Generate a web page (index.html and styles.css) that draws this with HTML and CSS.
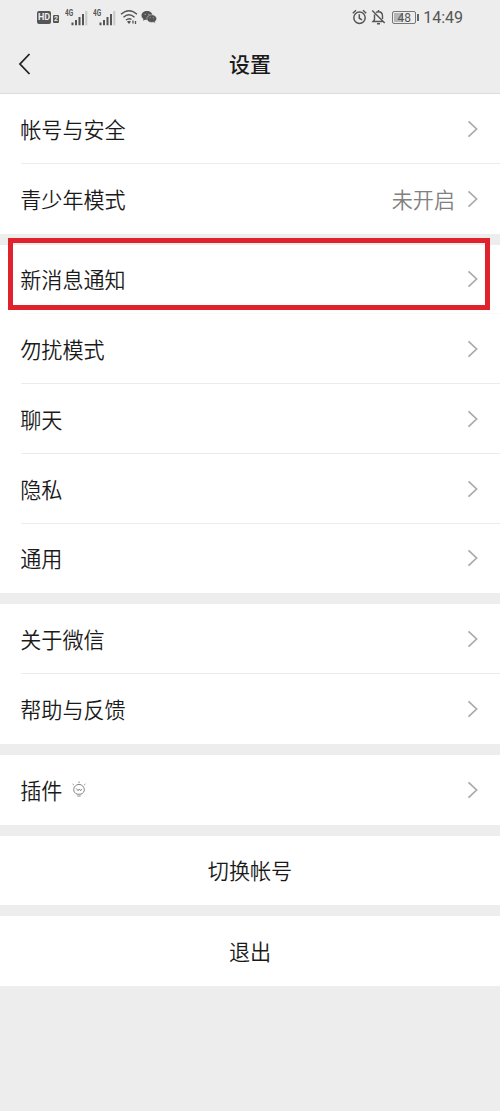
FILE: index.html
```
<!DOCTYPE html>
<html lang="zh-CN">
<head>
<meta charset="utf-8">
<title>设置</title>
<link rel="stylesheet" href="styles.css">
</head>
<body>
<svg class="defs" width="0" height="0">
  <symbol id="chevron" viewBox="0 0 12 18"><path d="M1.500 1.300 9.600 9 1.500 16.700" fill="none" stroke="#aaa" stroke-width="1.700"/></symbol>
  <symbol id="signal" viewBox="0 0 24 20">
    <path d="M5.500 15.500v2.800M9 13v5.300M12.500 10v8.300M16 7v11.300" stroke="#555" stroke-width="2"/>
    <path d="M19.300 4v14.300" stroke="#c8c8c8" stroke-width="2"/>
  </symbol>
</svg>
<div class="phone">
  <header class="statusbar">
    <div class="status-left">
      <span class="hd">HD</span><span class="sim">2</span>
      <span class="cell"><svg width="24" height="20"><use href="#signal"/></svg><b>4G</b></span>
      <span class="cell"><svg width="24" height="20"><use href="#signal"/></svg><b>4G</b></span>
      <svg class="wifi" width="18" height="16" viewBox="0 0 18 16" fill="none" stroke="#555" stroke-width="1.500">
        <path d="M1 5.300Q9-1.900 17 5.300M3.500 8.200Q9 3.200 14.500 8.200M6 11Q9 8.600 11.500 10.500"/>
        <path d="M7 12.500 9 11.800l2 .7L9 15z" fill="#555" stroke="none"/>
        <path d="M13 11.500v3M15.500 12v3" stroke-width="1.300"/>
      </svg>
      <svg class="wechat" width="16" height="14" viewBox="0 0 16 14">
        <path d="M6 1C2.800 1 .5 3 .5 5.500c0 1.400.8 2.600 2 3.400L2 10.800l2-1.100 2 .2c3 0 5.500-2 5.500-4.400S9 1 6 1z" fill="#555"/>
        <path d="M10.700 4.800c2.800 0 4.900 1.700 4.900 3.900 0 1.200-.7 2.200-1.700 2.900l.4 1.700-1.900-1-1.700.2c-2.700 0-4.800-1.700-4.800-3.800s2.100-3.900 4.800-3.900z" fill="#555" stroke="#ededed" stroke-width=".5"/>
        <g fill="#bbb"><circle cx="4.200" cy="4.300" r=".6"/><circle cx="7.800" cy="4.300" r=".6"/><circle cx="9.200" cy="7.800" r=".5"/><circle cx="12.300" cy="7.800" r=".5"/></g>
      </svg>
    </div>
    <div class="status-right">
      <svg width="15" height="16" viewBox="0 0 15 16" fill="none" stroke="#555" stroke-width="1.500">
        <circle cx="7.500" cy="8.700" r="5.700"/><path d="M7.300 5.200v4l2.700 1.600M.8 4.200 4 1.300M14.200 4.200 11 1.300"/>
      </svg>
      <svg class="mute" width="15" height="16" viewBox="0 0 15 16" fill="none" stroke="#555" stroke-width="1.400">
        <path d="M1.200 1.500 13.700 14M5 3.500Q6 2.700 7.500 2.700c2.600 0 4 1.700 4 4.200v3M3.500 5.500v5.300L2 12.500h9.500M6 14.700h3M7.500 1v1.700"/>
      </svg>
      <span class="battery"><span>48</span></span>
      <span class="time">14:49</span>
    </div>
  </header>
  <nav class="titlebar">
    <svg class="back" width="14" height="22" viewBox="0 0 14 22"><path d="M12.500 1 3 11l9.500 10" fill="none" stroke="#222" stroke-width="1.800"/></svg>
    <h1>设置</h1>
  </nav>
  <main class="groups">
    <section class="group">
      <div class="row"><span>帐号与安全</span><svg class="arrow"><use href="#chevron"/></svg></div>
      <div class="row"><span>青少年模式</span><span class="value">未开启</span><svg class="arrow"><use href="#chevron"/></svg></div>
    </section>
    <section class="group">
      <div class="row marked"><span>新消息通知</span><svg class="arrow"><use href="#chevron"/></svg></div>
      <div class="row"><span>勿扰模式</span><svg class="arrow"><use href="#chevron"/></svg></div>
      <div class="row"><span>聊天</span><svg class="arrow"><use href="#chevron"/></svg></div>
      <div class="row"><span>隐私</span><svg class="arrow"><use href="#chevron"/></svg></div>
      <div class="row"><span>通用</span><svg class="arrow"><use href="#chevron"/></svg></div>
    </section>
    <section class="group">
      <div class="row"><span>关于微信</span><svg class="arrow"><use href="#chevron"/></svg></div>
      <div class="row"><span>帮助与反馈</span><svg class="arrow"><use href="#chevron"/></svg></div>
    </section>
    <section class="group">
      <div class="row"><span>插件</span>
        <svg class="bulb" width="14" height="17" viewBox="0 0 14 17" fill="none" stroke="#777" stroke-width=".9">
          <path d="M5 13.200C2.900 12.300 1.700 10.700 1.700 8.700a5.300 5.300 0 0 1 10.600 0c0 2-1.200 3.600-3.300 4.500zM5.300 15h3.400M7 .5v1.600M.6 3l1.200 1M13.400 3l-1.200 1M4.300 7.500l1.700 2.200L7.300 8l1.200 1.700 1.300-1.700"/>
        </svg>
        <svg class="arrow"><use href="#chevron"/></svg></div>
    </section>
    <section class="group"><div class="row action">切换帐号</div></section>
    <section class="group"><div class="row action">退出</div></section>
  </main>
</div>
</body>
</html>
```
FILE: styles.css
```
*, *::after { box-sizing: border-box; }
body {
  margin: 0;
  background: #ededed;
  color: #1a1a1a;
  font-family: "Noto Sans CJK SC", sans-serif;
  font-weight: 350;
}
.defs { position: absolute; }
.phone { width: 500px; height: 1111px; overflow: hidden; }
.statusbar {
  display: flex;
  justify-content: space-between;
  height: 34px;
  padding: 0 37px;
  color: #555;
  font-family: Roboto, sans-serif;
  font-weight: 400;
}
.status-left, .status-right { display: flex; align-items: center; height: 34px; }
.hd {
  width: 14px;
  height: 13px;
  border-radius: 2px;
  background: #555;
  color: #ededed;
  font-size: 9px;
  font-weight: 700;
  line-height: 13.5px;
  text-align: center;
}
.sim {
  width: 6px;
  height: 8px;
  margin: 4px 4px 0 2px;
  border-radius: 1px;
  background: #555;
  color: #ededed;
  font-size: 7px;
  font-weight: 700;
  line-height: 8.5px;
  text-align: center;
}
.cell { position: relative; width: 24px; height: 20px; margin: -1px 4px 0 2px; }
.cell:nth-of-type(4) { margin-left: 0; }
.cell svg { display: block; margin-left: 2px; }
.cell b {
  position: absolute;
  left: 0;
  top: 2px;
  font-size: 9px;
  line-height: 8px;
  transform: scaleX(.72);
  transform-origin: left;
}
.wifi { margin-left: -1px; }
.wechat { margin-left: 3px; }
.mute { margin: 0 6px 0 4px; }
.battery {
  position: relative;
  width: 24px;
  height: 13px;
  border: 1px solid #777;
  border-radius: 2px;
  background: linear-gradient(90deg, #b5b5b5 47%, #ededed 47%);
  box-shadow: inset 0 0 0 1px #ededed;
  font-size: 12px;
  line-height: 12px;
  text-align: center;
}
.battery::after {
  content: "";
  position: absolute;
  right: -4px;
  top: 2px;
  width: 2px;
  height: 7px;
  background: #666;
}
.time { margin: 1px 0 0 7px; font-size: 16px; line-height: 20px; }
.titlebar {
  display: grid;
  grid-template-columns: 1fr auto 1fr;
  align-items: center;
  height: 60px;
  padding: 0 17px;
  border-bottom: 1px solid #dcdcdc;
}
h1 { margin: -2px 0 0; font-size: 21px; font-weight: 500; line-height: 30px; }
.groups { display: flex; flex-direction: column; gap: 11px; }
.group { background: #fff; }
.row {
  display: flex;
  align-items: center;
  height: 69.75px;
  padding: 0 21px 0 20.2px;
  font-size: 21.1px;
  line-height: 30px;
}
.row:not(:last-child) {
  background: linear-gradient(#ececec, #ececec) 21px 100% / 479px 1px no-repeat;
}
.arrow { width: 12px; height: 18px; margin-left: auto; flex: none; }
.value { margin-left: auto; color: #808080; }
.value + .arrow { margin-left: 12px; }
.bulb { margin-left: 10px; }
.action { justify-content: center; padding: 0; }
.row.marked { position: relative; background-image: linear-gradient(#f9f9f9, #f9f9f9); }
.marked::after {
  content: "";
  position: absolute;
  left: 8px;
  top: -6.5px;
  width: 482px;
  height: 72px;
  border: 5px solid #df222b;
}
```
